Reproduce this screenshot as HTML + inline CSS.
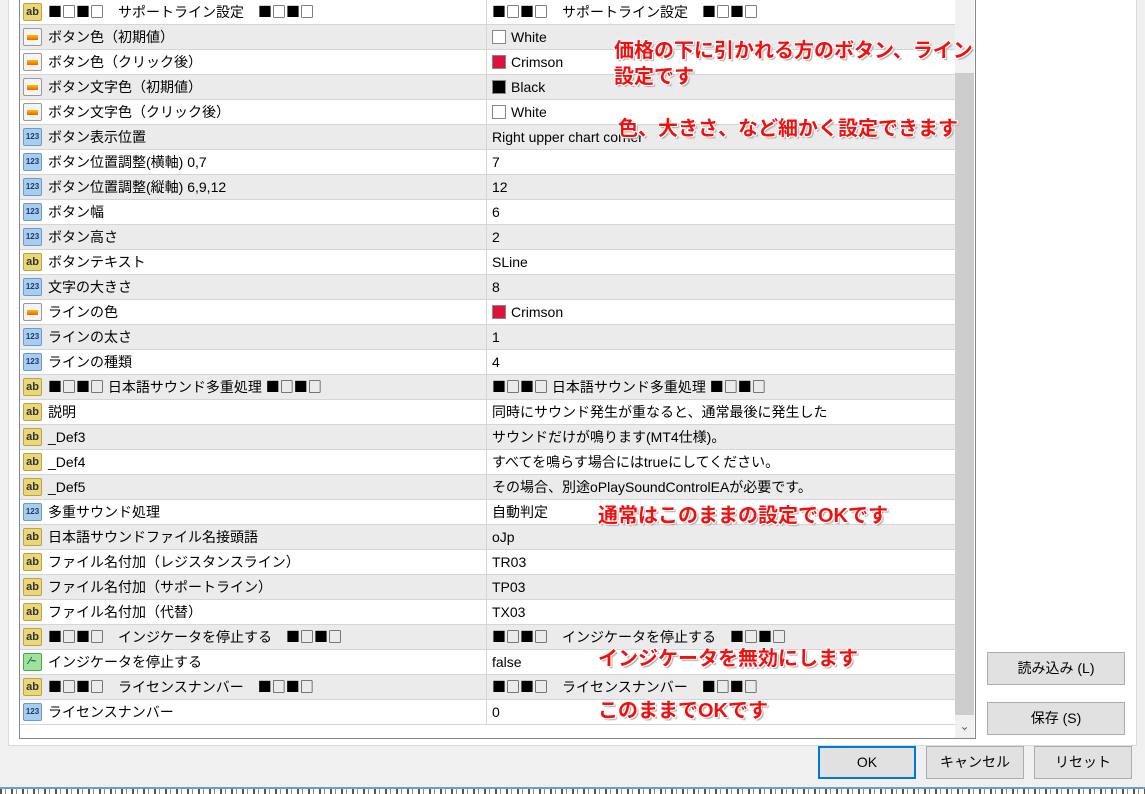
<!DOCTYPE html>
<html><head><meta charset="utf-8"><style>
*{margin:0;padding:0;box-sizing:border-box}
body{width:1145px;height:794px;background:#f0f0f0;position:relative;overflow:hidden;font-family:"Liberation Sans","Noto Sans CJK JP",sans-serif;font-size:13px;color:#000}
.panel{position:absolute;left:8px;top:-2px;width:1129px;height:748px;background:#fff;border:1px solid #dadada}
.list{position:absolute;left:19px;top:-1px;width:957px;height:740px;border:1px solid #828790;background:#fff;overflow:hidden}
.row{position:absolute;left:0;width:935px;height:25px;border-bottom:1px solid #d5d5d5;font-family:"Liberation Sans","Noto Sans CJK JP",sans-serif;font-size:14px;line-height:25px}
.row.g{background:#ebebeb}
.row .n{position:absolute;left:28px;top:0;white-space:nowrap}
.row .v{position:absolute;left:466px;top:0;border-left:1px solid #d5d5d5;height:24px;padding-left:5px;white-space:nowrap;width:470px}
.q{font-family:"Noto Sans CJK JP",sans-serif;font-size:14px;letter-spacing:0}
.ic{position:absolute;left:3px;top:3px;width:19px;height:18px;border-radius:2px;font-size:9px;font-weight:bold;line-height:16px;text-align:center}
.ab{background:#e9d77a;border:1px solid #b9a440;color:#333;font-size:11px}
.n1{background:#a9cdef;border:1px solid #6b9ac8;color:#1a3a6a;font-size:8px}
.cl{background:#f4f4f4;border:1px solid #999}
.cl:after{content:"";position:absolute;left:3px;top:6px;width:11px;height:5px;background:linear-gradient(#f7c200,#f06000)}
.bo{background:#9ee39a;border:1px solid #4ca94a;color:#155;font-size:10px}
.sw{display:inline-block;width:14px;height:14px;vertical-align:-2px;margin-right:5px;border:1px solid #888}
.sb{position:absolute;left:935px;top:0;width:19px;height:740px;background:#f0f0f0}
.thumb{position:absolute;left:935px;top:73px;width:19px;height:642px;background:#cdcdcd}
.arr{position:absolute;left:935px;top:716px;width:19px;height:20px;text-align:center;color:#606060;font-size:12px;line-height:20px}
.btn{position:absolute;background:#e1e1e1;border:1px solid #adadad;text-align:center;line-height:31px;font-family:"Liberation Sans","Noto Sans CJK JP",sans-serif;font-size:14px}
.ann{position:absolute;color:#f01010;font-weight:bold;font-size:20px;font-family:"Liberation Sans","Noto Sans CJK JP",sans-serif;white-space:nowrap;text-shadow:-1px -1px 0 #fff,1px -1px 0 #fff,-1px 1px 0 #fff,1px 1px 0 #fff,2px 2px 1px #aaa}
</style></head><body>
<div class="panel"></div>
<div class="list">
<div class="row" style="top:0"><div class="ic ab">ab</div><div class="n"><span class="q">■□■□</span>　サポートライン設定　<span class="q">■□■□</span></div><div class="v"><span class="q">■□■□</span>　サポートライン設定　<span class="q">■□■□</span></div></div>
<div class="row g" style="top:25px"><div class="ic cl"></div><div class="n">ボタン色（初期値）</div><div class="v"><span class="sw" style="background:#fff"></span>White</div></div>
<div class="row" style="top:50px"><div class="ic cl"></div><div class="n">ボタン色（クリック後）</div><div class="v"><span class="sw" style="background:#dc143c"></span>Crimson</div></div>
<div class="row g" style="top:75px"><div class="ic cl"></div><div class="n">ボタン文字色（初期値）</div><div class="v"><span class="sw" style="background:#000"></span>Black</div></div>
<div class="row" style="top:100px"><div class="ic cl"></div><div class="n">ボタン文字色（クリック後）</div><div class="v"><span class="sw" style="background:#fff"></span>White</div></div>
<div class="row g" style="top:125px"><div class="ic n1">123</div><div class="n">ボタン表示位置</div><div class="v">Right upper chart corner</div></div>
<div class="row" style="top:150px"><div class="ic n1">123</div><div class="n">ボタン位置調整(横軸) 0,7</div><div class="v">7</div></div>
<div class="row g" style="top:175px"><div class="ic n1">123</div><div class="n">ボタン位置調整(縦軸) 6,9,12</div><div class="v">12</div></div>
<div class="row" style="top:200px"><div class="ic n1">123</div><div class="n">ボタン幅</div><div class="v">6</div></div>
<div class="row g" style="top:225px"><div class="ic n1">123</div><div class="n">ボタン高さ</div><div class="v">2</div></div>
<div class="row" style="top:250px"><div class="ic ab">ab</div><div class="n">ボタンテキスト</div><div class="v">SLine</div></div>
<div class="row g" style="top:275px"><div class="ic n1">123</div><div class="n">文字の大きさ</div><div class="v">8</div></div>
<div class="row" style="top:300px"><div class="ic cl"></div><div class="n">ラインの色</div><div class="v"><span class="sw" style="background:#dc143c"></span>Crimson</div></div>
<div class="row g" style="top:325px"><div class="ic n1">123</div><div class="n">ラインの太さ</div><div class="v">1</div></div>
<div class="row" style="top:350px"><div class="ic n1">123</div><div class="n">ラインの種類</div><div class="v">4</div></div>
<div class="row g" style="top:375px"><div class="ic ab">ab</div><div class="n"><span class="q">■□■□</span> 日本語サウンド多重処理 <span class="q">■□■□</span></div><div class="v"><span class="q">■□■□</span> 日本語サウンド多重処理 <span class="q">■□■□</span></div></div>
<div class="row" style="top:400px"><div class="ic ab">ab</div><div class="n">説明</div><div class="v">同時にサウンド発生が重なると、通常最後に発生した</div></div>
<div class="row g" style="top:425px"><div class="ic ab">ab</div><div class="n">_Def3</div><div class="v">サウンドだけが鳴ります(MT4仕様)。</div></div>
<div class="row" style="top:450px"><div class="ic ab">ab</div><div class="n">_Def4</div><div class="v">すべてを鳴らす場合にはtrueにしてください。</div></div>
<div class="row g" style="top:475px"><div class="ic ab">ab</div><div class="n">_Def5</div><div class="v">その場合、別途oPlaySoundControlEAが必要です。</div></div>
<div class="row" style="top:500px"><div class="ic n1">123</div><div class="n">多重サウンド処理</div><div class="v">自動判定</div></div>
<div class="row g" style="top:525px"><div class="ic ab">ab</div><div class="n">日本語サウンドファイル名接頭語</div><div class="v">oJp</div></div>
<div class="row" style="top:550px"><div class="ic ab">ab</div><div class="n">ファイル名付加（レジスタンスライン）</div><div class="v">TR03</div></div>
<div class="row g" style="top:575px"><div class="ic ab">ab</div><div class="n">ファイル名付加（サポートライン）</div><div class="v">TP03</div></div>
<div class="row" style="top:600px"><div class="ic ab">ab</div><div class="n">ファイル名付加（代替）</div><div class="v">TX03</div></div>
<div class="row g" style="top:625px"><div class="ic ab">ab</div><div class="n"><span class="q">■□■□</span>　インジケータを停止する　<span class="q">■□■□</span></div><div class="v"><span class="q">■□■□</span>　インジケータを停止する　<span class="q">■□■□</span></div></div>
<div class="row" style="top:650px"><div class="ic bo">⁄~</div><div class="n">インジケータを停止する</div><div class="v">false</div></div>
<div class="row g" style="top:675px"><div class="ic ab">ab</div><div class="n"><span class="q">■□■□</span>　ライセンスナンバー　<span class="q">■□■□</span></div><div class="v"><span class="q">■□■□</span>　ライセンスナンバー　<span class="q">■□■□</span></div></div>
<div class="row" style="top:700px"><div class="ic n1">123</div><div class="n">ライセンスナンバー</div><div class="v">0</div></div>
<div class="sb"></div><div class="thumb"></div><div class="arr">⌄</div>
</div>
<div class="ann" style="left:614px;top:34px">価格の下に引かれる方のボタン、ライン</div>
<div class="ann" style="left:614px;top:60px">設定です</div>
<div class="ann" style="left:618px;top:112px">色、大きさ、など細かく設定できます</div>
<div class="ann" style="left:598px;top:499px">通常はこのままの設定でOKです</div>
<div class="ann" style="left:598px;top:642px">インジケータを無効にします</div>
<div class="ann" style="left:598px;top:694px">このままでOKです</div>
<div class="btn" style="left:987px;top:652px;width:138px;height:33px">読み込み (L)</div>
<div class="btn" style="left:987px;top:702px;width:138px;height:33px">保存 (S)</div>
<div class="btn" style="left:818px;top:746px;width:98px;height:33px;border:2px solid #0078d7;line-height:29px">OK</div>
<div class="btn" style="left:926px;top:746px;width:98px;height:33px">キャンセル</div>
<div class="btn" style="left:1034px;top:746px;width:98px;height:33px">リセット</div>
<div style="position:absolute;left:0;top:787px;width:1145px;height:2px;background:#6a9ccf"></div>
<div style="position:absolute;left:0;top:789px;width:1145px;height:5px;background:repeating-linear-gradient(90deg,#555 0 2px,#fff 2px 5px,#888 5px 6px,#fff 6px 11px)"></div>
</body></html>
